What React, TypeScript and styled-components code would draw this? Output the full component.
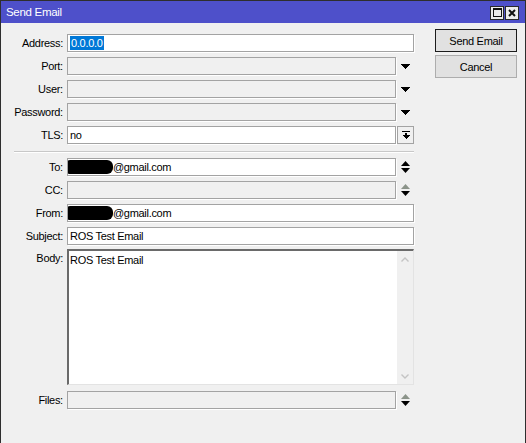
import React from "react";
import styled, { createGlobalStyle } from "styled-components";

const GlobalStyle = createGlobalStyle`
    body {
        margin: 0;
        font-family: "Liberation Sans", Arial, sans-serif;
        font-size: 11px;
        letter-spacing: -0.3px;
        color: #000;
    }
`;

const DownArrow = ({ color = "#000" }: { color?: string }) => (
    <svg width="9" height="5" viewBox="0 0 9 5" shapeRendering="crispEdges">
        <polygon points="0,0 9,0 4.5,5" fill={color} />
    </svg>
);

const UpDownArrow = ({ up = "#000", down = "#000" }: { up?: string; down?: string }) => (
    <svg width="9" height="12" viewBox="0 0 9 12">
        <polygon points="4.5,0 9,5 0,5" fill={up} />
        <polygon points="0,7 9,7 4.5,12" fill={down} />
    </svg>
);

const BarDownArrow = () => (
    <svg width="8" height="9" viewBox="0 0 8 9" shapeRendering="crispEdges">
        <rect x="0" y="0" width="8" height="1" fill="#000" />
        <rect x="3" y="2" width="2" height="3" fill="#000" />
        <polygon points="0,4 8,4 4,8" fill="#000" />
    </svg>
);

const Chevron = ({ up }: { up?: boolean }) => (
    <svg width="8" height="5" viewBox="0 0 8 5">
        <polyline
            points={up ? "0.5,4.5 4,1 7.5,4.5" : "0.5,0.5 4,4 7.5,0.5"}
            fill="none"
            stroke="#c4c4c4"
            strokeWidth="1.4"
        />
    </svg>
);

const App = () => {
    return (
        <>
            <GlobalStyle />
            <Window>
                <TitleBar>
                    <Title>Send Email</Title>
                    <TitleButtons>
                        <TitleButton>
                            <MaxIcon />
                        </TitleButton>
                        <TitleButton>
                            <svg width="8" height="8" viewBox="0 0 8 8">
                                <path d="M1 1 L7 7 M7 1 L1 7" stroke="#111" strokeWidth="2" />
                            </svg>
                        </TitleButton>
                    </TitleButtons>
                </TitleBar>

                <Content>
                    <Form>
                        <Row>
                            <Label>Address:</Label>
                            <Field width={347}>
                                <Selected>0.0.0.0</Selected>
                            </Field>
                        </Row>
                        <Row>
                            <Label>Port:</Label>
                            <Field width={330} disabled />
                            <Side>
                                <DownArrow />
                            </Side>
                        </Row>
                        <Row>
                            <Label>User:</Label>
                            <Field width={330} disabled />
                            <Side>
                                <DownArrow />
                            </Side>
                        </Row>
                        <Row>
                            <Label>Password:</Label>
                            <Field width={330} disabled />
                            <Side>
                                <DownArrow />
                            </Side>
                        </Row>
                        <Row>
                            <Label>TLS:</Label>
                            <Field width={329}>no</Field>
                            <ComboButton>
                                <BarDownArrow />
                            </ComboButton>
                        </Row>

                        <Separator />

                        <Row>
                            <Label>To:</Label>
                            <Field width={330}>
                                <Redacted />@gmail.com
                            </Field>
                            <Side>
                                <UpDownArrow />
                            </Side>
                        </Row>
                        <Row>
                            <Label>CC:</Label>
                            <Field width={330} disabled />
                            <Side>
                                <UpDownArrow up="#8c948a" />
                            </Side>
                        </Row>
                        <Row>
                            <Label>From:</Label>
                            <Field width={347}>
                                <Redacted />@gmail.com
                            </Field>
                        </Row>
                        <Row>
                            <Label>Subject:</Label>
                            <Field width={347}>ROS Test Email</Field>
                        </Row>
                        <BodyRow>
                            <Label>Body:</Label>
                            <TextArea>
                                <TextContent>ROS Test Email</TextContent>
                                <ScrollBar>
                                    <Chevron up />
                                    <Chevron />
                                </ScrollBar>
                            </TextArea>
                        </BodyRow>
                        <FilesRow>
                            <Label>Files:</Label>
                            <Field width={330} disabled />
                            <Side>
                                <UpDownArrow up="#8c948a" />
                            </Side>
                        </FilesRow>
                    </Form>

                    <Buttons>
                        <Button primary>Send Email</Button>
                        <Button>Cancel</Button>
                    </Buttons>
                </Content>
            </Window>
        </>
    );
};

const Window = styled.div`
    width: 526px;
    height: 443px;
    box-sizing: border-box;
    border: 1px solid #2e2e2e;
    border-bottom: none;
    background: #f0f0f0;
    overflow: hidden;
`;

const TitleBar = styled.div`
    height: 22px;
    background: #4e50ca;
    display: flex;
    align-items: center;
    justify-content: space-between;
    padding: 0 6px 0 5px;
`;

const Title = styled.span`
    color: #fff;
    font-size: 11.5px;
`;

const TitleButtons = styled.div`
    display: flex;
    gap: 1px;
    margin-top: 1px;
`;

const TitleButton = styled.div`
    width: 14px;
    height: 14px;
    box-sizing: border-box;
    border: 1px solid #2a2a2a;
    background: #ececec;
    display: flex;
    align-items: center;
    justify-content: center;
`;

const MaxIcon = styled.div`
    width: 9px;
    height: 9px;
    box-sizing: border-box;
    border: 1px solid #111;
    border-top-width: 2px;
`;

const Content = styled.div`
    display: flex;
    align-items: flex-start;
    padding-left: 13px;
`;

const Form = styled.div`
    width: 400px;
    margin-top: 11px;
    display: flex;
    flex-direction: column;
    gap: 5px;
`;

const Row = styled.div`
    display: flex;
    align-items: center;
    height: 18px;
`;

const BodyRow = styled.div`
    display: flex;
    align-items: flex-start;
    height: 136px;
    margin-top: -1px;
`;

const FilesRow = styled(Row)`
    margin-top: 1px;
`;

const Label = styled.div`
    width: 49px;
    margin-right: 4px;
    text-align: right;
    white-space: nowrap;
    line-height: 18px;
`;

const Field = styled.div<{ width: number; disabled?: boolean }>`
    width: ${(p) => p.width}px;
    height: 18px;
    box-sizing: border-box;
    border: 1px solid #a3a3a3;
    box-shadow: 1px 1px 0 #fff;
    background: ${(p) => (p.disabled ? "#f0f0f0" : "#fff")};
    padding-left: 2px;
    display: flex;
    align-items: center;
    white-space: nowrap;
    overflow: hidden;
`;

const Selected = styled.span`
    background: #0078d7;
    color: #fff;
    padding: 0 1px;
    line-height: 14px;
`;

const Redacted = styled.span`
    display: inline-block;
    width: 46px;
    height: 14px;
    margin-left: -3px;
    background: #000;
    border-radius: 3px 6px 6px 3px;
`;

const Side = styled.div`
    width: 17px;
    display: flex;
    justify-content: center;
    padding-left: 1px;
`;

const ComboButton = styled.div`
    width: 17px;
    height: 18px;
    box-sizing: border-box;
    margin-left: 1px;
    border: 1px solid #a3a3a3;
    background: #f0f0f0;
    display: flex;
    align-items: center;
    justify-content: center;
`;

const Separator = styled.div`
    height: 0;
    border-top: 1px solid #c8c8c8;
    border-bottom: 1px solid #fff;
    margin-top: 2px;
`;

const TextArea = styled.div`
    width: 347px;
    height: 136px;
    box-sizing: border-box;
    border: 1px solid #e3e3e3;
    border-top: 2px solid #6a6a6a;
    border-left: 2px solid #6a6a6a;
    background: #fff;
    display: flex;
`;

const TextContent = styled.div`
    flex: 1;
    padding: 2px 0 0 1px;
    line-height: 14px;
`;

const ScrollBar = styled.div`
    width: 16px;
    background: #f0f0f0;
    display: flex;
    flex-direction: column;
    align-items: center;
    justify-content: space-between;
    padding: 6px 0 5px;
`;

const Buttons = styled.div`
    margin-left: 21px;
    margin-top: 6px;
    display: flex;
    flex-direction: column;
    gap: 3px;
`;

const Button = styled.button<{ primary?: boolean }>`
    width: 82px;
    height: 23px;
    box-sizing: border-box;
    border: 1px solid ${(p) => (p.primary ? "#1c1c1c" : "#adadad")};
    background: #e1e1e1;
    font-family: inherit;
    font-size: 11px;
    letter-spacing: -0.3px;
    color: #000;
    padding: 0;
`;

export default App;
